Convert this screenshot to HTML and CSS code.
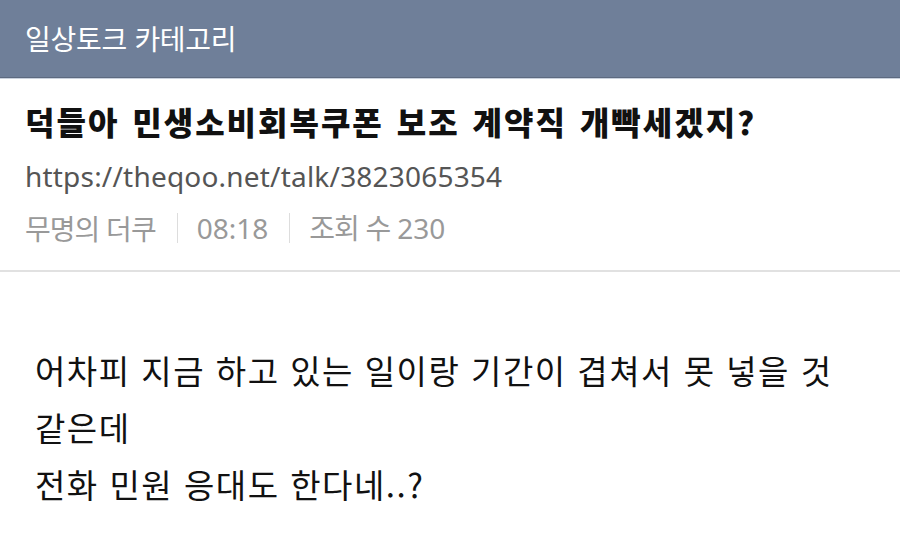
FILE: index.html
```html
<!DOCTYPE html>
<html lang="ko">
<head>
<meta charset="utf-8">
<link rel="stylesheet" href="styles.css">
</head>
<body>
<header class="topbar"><span class="cat">일상토크 카테고리</span></header>
<section class="post-head">
  <h1 class="title">덕들아 민생소비회복쿠폰 보조 계약직 개빡세겠지?</h1>
  <div class="url">https://theqoo.net/talk/3823065354</div>
  <div class="meta"><span>무명의 더쿠</span><span class="sep"></span><span class="num">08:18</span><span class="sep"></span><span>조회 수 <span class="num">230</span></span></div>
</section>
<article class="content">
  <p>어차피 지금 하고 있는 일이랑 기간이 겹쳐서 못 넣을 것<br>같은데<br>전화 민원 응대도 한다네..?</p>
</article>
</body>
</html>
```
FILE: styles.css
```css
html, body { margin: 0; padding: 0; background: #fff; }
body { font-family: "Noto Sans CJK KR", "Noto Sans", sans-serif; width: 900px; height: 543px; overflow: hidden; }
.topbar {
  height: 78px;
  box-sizing: border-box;
  background: #6f7f99;
  border-bottom: 1px solid #5d6a80;
  box-shadow: 0 1px 0 #c9d1dd;
  display: flex;
  align-items: center;
  padding: 0 0 2px 25px;
}
.cat { color: #fff; font-size: 28px; letter-spacing: -0.3px; }
.post-head {
  height: 194px;
  box-sizing: border-box;
  padding: 18px 25px 0;
  border-bottom: 2px solid #e1e1e1;
}
.title { margin: 0; font-size: 32px; font-weight: 900; color: #111; line-height: 50px; letter-spacing: 2px; word-spacing: 2px; }
.url { margin-top: 4px; font-size: 28px; color: #555; line-height: 52px; letter-spacing: 0.2px; font-family: "Noto Sans", "Noto Sans CJK KR", sans-serif; }
.meta { font-size: 28px; color: #999; line-height: 50px; display: flex; align-items: center; letter-spacing: -1px; }
.num { font-family: "Noto Sans", "Noto Sans CJK KR", sans-serif; letter-spacing: 0; }
.sep { display: inline-block; width: 1px; height: 30px; background: #ddd; margin: 0 19px 0 21px; }
.content { padding: 70px 35px 0; }
.content p { margin: 0; font-size: 33px; line-height: 57px; color: #111; letter-spacing: 1.5px; }
```
